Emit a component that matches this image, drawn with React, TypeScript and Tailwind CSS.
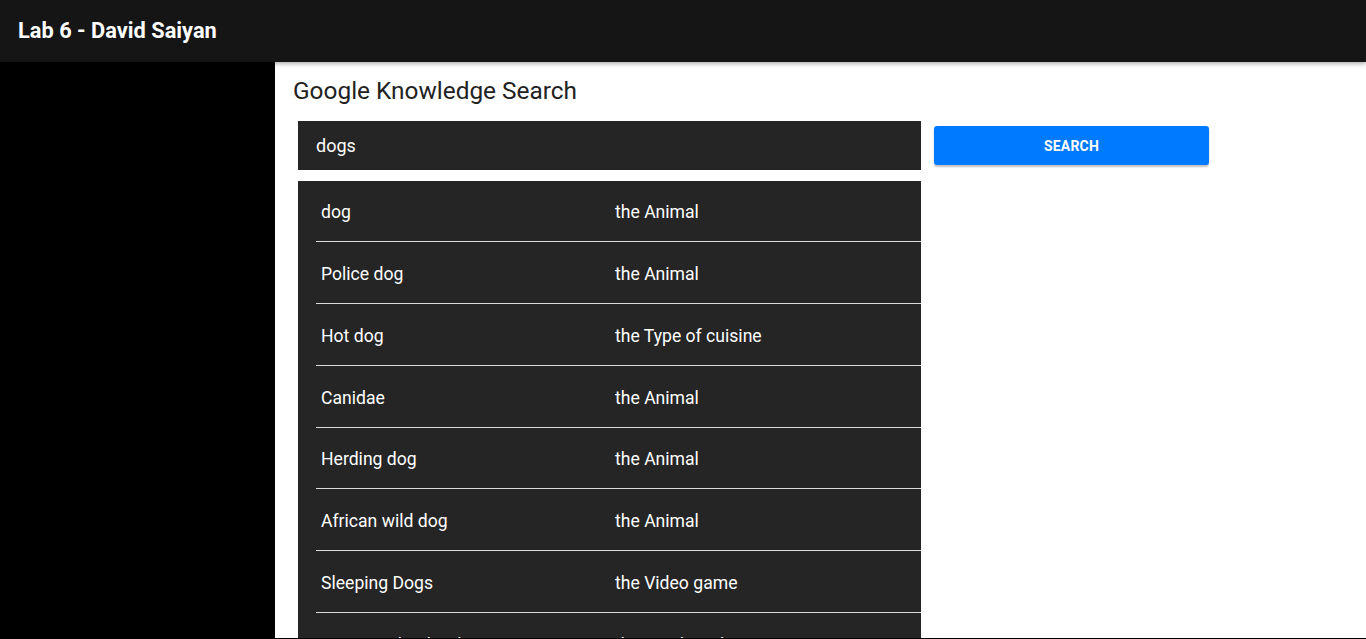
import React from "react";

const rows: [string, string, string][] = [
  ["dog", "the Animal", "h-[61px]"],
  ["Police dog", "the Animal", "h-[62px]"],
  ["Hot dog", "the Type of cuisine", "h-[62px]"],
  ["Canidae", "the Animal", "h-[62px]"],
  ["Herding dog", "the Animal", "h-[61px]"],
  ["African wild dog", "the Animal", "h-[62px]"],
  ["Sleeping Dogs", "the Video game", "h-[62px]"],
  ["German Shepherd", "the Dog breed", "h-[62px]"],
  ["Dogs", "the TV series", "h-[62px]"],
  ["Reservoir Dogs", "the Movie", "h-[62px]"],
];

export default function App() {
  return (
    <div className="min-h-screen bg-white font-['Roboto',sans-serif]">
      <header className="relative z-10 flex h-[62px] items-center bg-[#151515] pl-[18px] shadow-[0_2px_4px_rgba(0,0,0,0.3)]">
        <h1 className="text-[21.8px] font-bold text-white">Lab 6 - David Saiyan</h1>
      </header>
      <div className="flex">
        <aside className="w-[275px] shrink-0 self-stretch bg-black" />
        <main className="flex-1 pl-[18px] pt-[14px]">
          <h2 className="text-[24.4px] leading-[30px] text-[#222]">Google Knowledge Search</h2>
          <div className="mt-[15px] flex items-start pl-[5px]">
            <div className="w-[623px]">
              <div className="flex h-[49px] items-center bg-[#252525] pl-[18px] text-[18px] text-white">
                dogs
              </div>
              <div className="mt-[11px] bg-[#252525] pl-[18px]">
                {rows.map(([a, b, h], i) => (
                  <div
                    key={i}
                    className={`flex items-center border-b border-[#dcdcdc] pt-[3px] text-[17.6px] text-white ${h}`}
                  >
                    <span className="w-[299px] pl-[5px]">{a}</span>
                    <span>{b}</span>
                  </div>
                ))}
              </div>
            </div>
            <button className="ml-[13px] mt-[5px] h-[39px] w-[275px] rounded-[3px] bg-[#007bff] pt-px text-[14px] font-bold tracking-[0.2px] text-white shadow-[0_2px_2px_rgba(0,0,0,0.25)]">
              SEARCH
            </button>
          </div>
        </main>
      </div>
      <div className="fixed bottom-0 left-0 right-0 h-px bg-black" />
    </div>
  );
}
